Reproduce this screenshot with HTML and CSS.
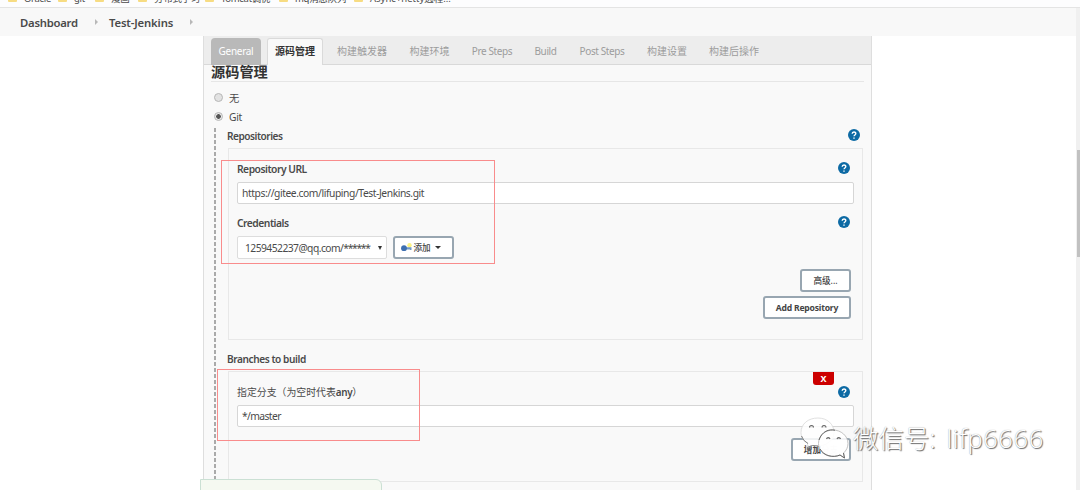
FILE: index.html
```html
<!DOCTYPE html>
<html lang="zh-CN">
<head>
<meta charset="utf-8">
<title>Test-Jenkins Config</title>
<link rel="stylesheet" href="styles.css">
</head>
<body>
<div class="page">
  <div class="bookmarks">
    <span class="bm bm-1"><i class="folder"></i>Oracle</span>
    <span class="bm bm-2"><i class="folder"></i>git</span>
    <span class="bm bm-3"><i class="folder"></i>漫画</span>
    <span class="bm bm-4"><i class="folder"></i>分布式学习</span>
    <span class="bm bm-5"><i class="folder"></i>Tomcat调优</span>
    <span class="bm bm-6"><i class="folder"></i>mq消息队列</span>
    <span class="bm bm-7"><i class="folder"></i>Async+netty远程...</span>
  </div>
  <div class="crumbs">
    <span class="crumb crumb-home">Dashboard</span><i class="arrow"></i>
    <span class="crumb crumb-job">Test-Jenkins</span><i class="arrow"></i>
  </div>
  <div class="main">
    <div class="panel">
      <div class="tabs">
        <span class="tab tab-hover">General</span>
        <span class="tab tab-active">源码管理</span>
        <span class="tab">构建触发器</span>
        <span class="tab">构建环境</span>
        <span class="tab tab-latin">Pre Steps</span>
        <span class="tab tab-latin">Build</span>
        <span class="tab tab-latin">Post Steps</span>
        <span class="tab">构建设置</span>
        <span class="tab">构建后操作</span>
      </div>
      <h1 class="title">源码管理</h1>
      <div class="choice choice-none"><i class="radio"></i><span>无</span></div>
      <div class="choice"><i class="radio radio-on"></i><span>Git</span></div>
      <div class="nested">
        <div class="head head-repos"><span>Repositories</span><i class="help"><svg viewBox="0 0 12 12"><circle cx="6" cy="6" r="6"/><path d="M4.2 4.7C4.2 2.4 7.8 2.4 7.8 4.6C7.8 6 6 5.9 6 7.3M6 8.5V9.7"/></svg></i></div>
        <div class="box box-repos">
          <div class="label label-url"><span>Repository URL</span><i class="help"><svg viewBox="0 0 12 12"><circle cx="6" cy="6" r="6"/><path d="M4.2 4.7C4.2 2.4 7.8 2.4 7.8 4.6C7.8 6 6 5.9 6 7.3M6 8.5V9.7"/></svg></i></div>
          <div class="input"><span class="url">https://gitee.com/lifuping/Test-Jenkins.git</span></div>
          <div class="label label-cred"><span class="cred">Credentials</span><i class="help"><svg viewBox="0 0 12 12"><circle cx="6" cy="6" r="6"/><path d="M4.2 4.7C4.2 2.4 7.8 2.4 7.8 4.6C7.8 6 6 5.9 6 7.3M6 8.5V9.7"/></svg></i></div>
          <div class="cred-row">
            <div class="select"><span class="account">1259452237@qq.com/<span class="stars">******</span></span><i class="caret"></i></div>
            <div class="btn btn-add"><svg class="key" viewBox="0 0 11 10"><circle cx="8.5" cy="2.3" r="2.2" fill="#fbf282"/><path d="M4 4.200H10.500V7H9V6.4H4Z" fill="#6f97c6"/><circle cx="3" cy="5.2" r="2.9" fill="#3e6fb0"/></svg><span>添加</span><i class="caret caret-wide"></i></div>
          </div>
          <div class="actions">
            <div class="btn btn-adv">高级...</div>
            <div class="btn btn-repo"><span>Add Repository</span></div>
          </div>
        </div>
        <div class="head head-branches"><span>Branches to build</span></div>
        <div class="box box-branches">
          <div class="delete-row"><span class="delete">X</span></div>
          <div class="label label-spec"><span class="spec">指定分支（为空时代表<b>any</b>）</span><i class="help"><svg viewBox="0 0 12 12"><circle cx="6" cy="6" r="6"/><path d="M4.2 4.7C4.2 2.4 7.8 2.4 7.8 4.6C7.8 6 6 5.9 6 7.3M6 8.5V9.7"/></svg></i></div>
          <div class="input"><span class="master">*/master</span></div>
          <div class="actions actions-branch"><div class="btn btn-branch">增加<span class="faded">分支</span></div></div>
        </div>
      </div>
    </div>
  </div>
  <div class="scrollbar"><i class="thumb"></i></div>
  <div class="mark mark-repo"></div>
  <div class="mark mark-branch"></div>
  <div class="toast"></div>
  <div class="watermark">
    <svg class="wechat" viewBox="0 0 50 44">
      <path d="M18 1C8 1 1 7 1 15.500C1 20 3.500 24 8 26.500L6 31L12.500 28.500C20 30.500 34 27 34 15.500C34 7 27 1 18 1Z" fill="#fff" fill-opacity=".85" stroke="#d8d8d8" stroke-width=".8"/>
      <path d="M7 30.500L12.500 28.500L18 29M1.500 19Q3 24 8 26.500" fill="none" stroke="#777" stroke-width=".9"/>
      <path d="M33 13C25 13 18.500 19 18.500 26.500C18.500 34 25 39.500 33 39.500C36 39.500 38 39 40 38L44.500 41L43.500 36C46.500 33.500 48 30 48 26.500C48 19 41 13 33 13Z" fill="#fff" fill-opacity=".88" stroke="#bbb" stroke-width=".9"/>
      <path d="M19 23C22 14 29 12 35 13.200M20 32C24 39 33 41 40 38L44.500 41L43.500 36" fill="none" stroke="#666" stroke-width="1"/>
      <g fill="#ddd" stroke="#666" stroke-width="1.100"><path d="M9.500 10.500A2 2 0 0 1 13.500 10.500"/><path d="M22 10.500A2 2 0 0 1 26 10.500"/><path d="M26.500 22A1.800 1.800 0 0 1 30 22"/><path d="M37 22A1.800 1.800 0 0 1 40.500 22"/></g>
    </svg>
    <span class="wm-text">微信号<span class="wm-id">: lifp6666</span></span>
  </div>
</div>
</body>
</html>
```

FILE: styles.css
```css
* { box-sizing: border-box; }
body { margin: 0; }
i { font-style: normal; }
.page {
  position: relative;
  width: 1080px;
  height: 490px;
  overflow: hidden;
  display: flex;
  flex-direction: column;
  background: #fff;
  color: #4a4a4a;
  font: 10.3px/14px "Noto Sans", "Noto Sans CJK SC", sans-serif;
  white-space: nowrap;
}
.bookmarks {
  flex: none;
  display: flex;
  height: 8px;
  padding-left: 8px;
  overflow: hidden;
  background: #fdfdfe;
  border-bottom: 1px solid #e4e4e4;
  font-size: 9.500px;
  letter-spacing: -.3px;
}
.bm { display: flex; flex: none; gap: 7px; margin-top: -8px; }
.bm-1 { width: 50px; }
.bm-2 { width: 37px; }
.bm-3 { width: 43px; }
.bm-4 { width: 67px; }
.bm-5 { width: 74px; }
.bm-6 { width: 75px; }
.bm-7 { letter-spacing: 0; }
.folder { width: 9px; height: 7px; margin-top: 3px; background: #f7dc83; border-radius: 1px; }
.crumbs {
  flex: none;
  display: flex;
  align-items: center;
  height: 28px;
  padding: 1px 0 0 20px;
  background: #f8f8f8;
  font-size: 11.300px;
  font-weight: 600;
  letter-spacing: -.25px;
}
.crumb-home { width: 75px; }
.crumb-job { margin-left: 11px; width: 81px; letter-spacing: -.15px; }
.arrow { width: 3px; margin-top: -1px; border-left: 3px solid #b8b8b8; border-top: 3px solid transparent; border-bottom: 3px solid transparent; }
.main { flex: 1; padding-left: 203px; }
.panel {
  width: 669px;
  height: 454px;
  background: #f9f9f9;
  border: solid #dedede;
  border-width: 0 1px;
}
.tabs {
  display: grid;
  grid-template-columns: 50px 56px 64px 57px 54px 39px 60px 56px 64px;
  column-gap: 7px;
  height: 29px;
  padding: 2px 0 0 7px;
  background: #ededed;
  border-bottom: 1px solid #d9d9d9;
  color: #9c9c9c;
  font-size: 10px;
  text-align: center;
  line-height: 27px;
}
.tab-hover { background: #b9b9b9; color: #fff; border-radius: 4px 4px 0 0; letter-spacing: -.3px; }
.tab-active { margin-left: -1px; margin-right: 1px; background: #f9f9f9; border: 1px solid #dadada; border-bottom: 0; border-radius: 3px 3px 0 0; color: #333; font-weight: 700; line-height: 25px; }
.tab-active ~ .tab { margin-left: -1px; margin-right: 1px; }
.tab-latin { letter-spacing: -.4px; }
.title { margin: 0 7px; height: 17px; border-bottom: 1px solid #e6e6e6; font-size: 14.200px; line-height: 14px; font-weight: 700; color: #333; }
.choice { display: flex; align-items: center; gap: 6px; height: 19px; padding-left: 10px; }
.choice-none { margin-top: 6px; }
.choice span { padding-top: 1px; letter-spacing: -.3px; }
.radio { width: 9px; height: 9px; border: 1px solid #b7b7b7; border-radius: 50%; background: #e2e2e2; }
.radio-on { background: radial-gradient(circle, #555 0 2px, #e9e9e9 2.600px); }
.nested {
  margin: 2px 8px 0 10px;
  height: 363px;
  padding-left: 14px;
  background: repeating-linear-gradient(#aaa 0 4px, transparent 4px 6px) 0 0 / 2px 100% no-repeat;
}
.head { display: flex; justify-content: space-between; padding: 1px 3px 0 0; margin-left: -1px; font-weight: 600; font-size: 10.100px; letter-spacing: -.48px; }
.head-repos { height: 20px; }
.head span, .label span { display: block; }
.head-branches { height: 31px; padding-top: 12px; letter-spacing: -.42px; }
.box { border: 1px solid #e8e8e8; padding: 0 8px 0 8px; }
.box-repos { height: 192px; }
.box-branches { height: 111px; }
.help { width: 12px; height: 12px; }
.help svg { display: block; width: 12px; height: 12px; }
.help circle { fill: #0d6aa4; }
.help path { fill: none; stroke: #fff; stroke-width: 1.400; }
.label { display: flex; justify-content: space-between; padding-right: 4px; font-weight: 600; letter-spacing: -.5px; }
.label-url { height: 33px; padding-top: 13px; }
.label-cred { height: 32px; padding-top: 12px; }
.label-spec { height: 21px; padding-top: 2px; }
.label .spec { margin-top: -1px; font-weight: 400; font-size: 9.900px; letter-spacing: 0; }
.spec b { font-weight: 600; letter-spacing: -.3px; }
.input { height: 22px; padding-left: 4px; border: 1px solid #d6d6d6; border-radius: 2px; background: #fff; line-height: 21px; }
.url { letter-spacing: -.43px; }
.master { letter-spacing: -.6px; }
.cred-row { display: flex; gap: 6px; align-items: center; height: 23px; }
.select { display: flex; align-items: center; justify-content: space-between; width: 150px; height: 23px; padding: 0 4px 0 7px; border: 1px solid #ddd; border-radius: 2px; background: #fff; }
.account { padding-top: 1px; line-height: 14px; letter-spacing: -.55px; }
.stars { letter-spacing: -1.300px; }
.caret { width: 6px; height: 4px; border: solid transparent; border-width: 4px 3px 0; border-top-color: #333; }
.select .caret { width: 4px; border-width: 4px 2px 0; }
.caret-wide { margin-left: 4px; border-width: 3px 3px 0; height: 3px; }
.btn {
  display: flex;
  align-items: center;
  justify-content: center;
  height: 23px;
  border: 2px solid #98a6b1;
  border-radius: 3px;
  background: #fff;
  color: #444;
  font-size: 8.600px;
  font-weight: 700;
}
.btn-add { width: 61px; padding-right: 5px; font-weight: 500; }
.key { width: 11px; height: 10px; margin-right: 1px; }
.actions { display: flex; flex-direction: column; align-items: flex-end; gap: 4px; padding: 10px 3px 0 0; }
.btn-adv { width: 51px; font-weight: 500; }
.btn-repo { width: 88px; letter-spacing: -.22px; }
.delete-row { display: flex; justify-content: flex-end; height: 12px; padding-right: 20px; }
.delete { width: 21px; height: 13px; background: #c00; color: #fff; border-radius: 0 0 3px 3px; font-weight: 700; font-size: 9px; line-height: 13px; text-align: center; }
.btn-branch { width: 60px; }
.faded { opacity: .15; font-weight: 400; }
.actions-branch { padding-top: 11px; }
.scrollbar { position: absolute; right: 0; top: 8px; width: 4px; height: 482px; background: #f0f0f0; }
.thumb { display: block; width: 3px; height: 107px; margin: 142px 0 0 1px; background: #c1c1c1; }
.mark { position: absolute; border: 1px solid #f98c8c; }
.mark-repo { left: 221px; top: 160px; width: 274px; height: 104px; }
.mark-branch { left: 217px; top: 369px; width: 203px; height: 72px; }
.toast { position: absolute; left: 200px; top: 479px; width: 182px; height: 20px; background: #f5f9f1; border: 1px solid #cbe0d4; border-radius: 0 6px 0 0; }
.watermark { position: absolute; left: 800px; top: 417px; display: flex; }
.wechat { width: 50px; height: 44px; }
.wm-text { margin: 3px 0 0 3px; font: 300 25.500px/36px "Open Sans", "Noto Sans CJK SC", sans-serif; color: #fff; text-shadow: 1px 1px 1px #666, 0 0 1px #999; }
.wm-id { letter-spacing: .6px; word-spacing: 3px; }
```
